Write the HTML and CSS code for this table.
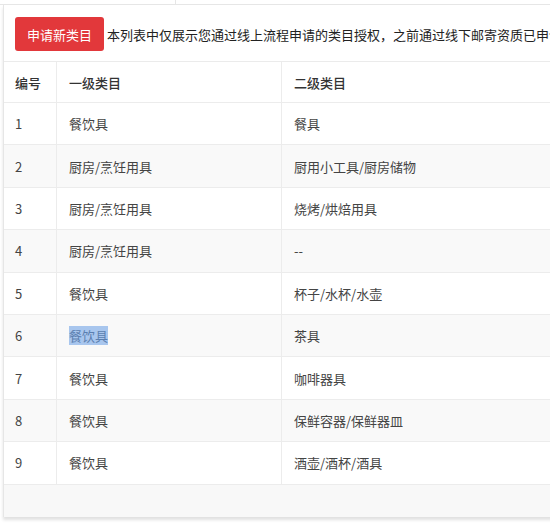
FILE: index.html
```html
<!DOCTYPE html>
<html lang="zh">
<head>
<meta charset="utf-8">
<link rel="stylesheet" href="styles.css">
</head>
<body>
<div class="top-strip">
  <div class="ts-cell ts-left"></div>
  <div class="ts-cell ts-right"></div>
</div>
<div class="panel">
  <div class="toolbar">
    <button class="btn-apply">申请新类目</button>
    <span class="notice">本列表中仅展示您通过线上流程申请的类目授权，之前通过线下邮寄资质已申请</span>
  </div>
  <table class="cat-table">
    <thead>
      <tr><th class="c-no">编号</th><th class="c-l1">一级类目</th><th class="c-l2">二级类目</th></tr>
    </thead>
    <tbody>
      <tr><td>1</td><td>餐饮具</td><td>餐具</td></tr>
      <tr><td>2</td><td>厨房/烹饪用具</td><td>厨用小工具/厨房储物</td></tr>
      <tr><td>3</td><td>厨房/烹饪用具</td><td>烧烤/烘焙用具</td></tr>
      <tr><td>4</td><td>厨房/烹饪用具</td><td class="muted">--</td></tr>
      <tr><td>5</td><td>餐饮具</td><td>杯子/水杯/水壶</td></tr>
      <tr><td>6</td><td><span class="selected">餐饮具</span></td><td>茶具</td></tr>
      <tr><td>7</td><td>餐饮具</td><td>咖啡器具</td></tr>
      <tr><td>8</td><td>餐饮具</td><td>保鲜容器/保鲜器皿</td></tr>
      <tr><td>9</td><td>餐饮具</td><td>酒壶/酒杯/酒具</td></tr>
    </tbody>
  </table>
  <div class="panel-foot"></div>
</div>
</body>
</html>
```
FILE: styles.css
```css
html, body {
  margin: 0;
  padding: 0;
  background: #ffffff;
  overflow: hidden;
  width: 550px;
  height: 525px;
}
body {
  font-family: "Noto Sans CJK SC", "Microsoft YaHei", sans-serif;
  font-size: 13px;
  color: #333333;
}
.top-strip {
  display: flex;
  height: 4px;
  border-bottom: 1px solid #e6e6e6;
  width: 700px;
}
.ts-left {
  width: 175px;
  border-right: 1px solid #e6e6e6;
}
.ts-right {
  flex: 1;
}
.panel {
  margin-left: 3px;
  width: 700px;
  border-left: 1px solid #e6e6e6;
  box-shadow: 0 3px 3px rgba(0, 0, 0, 0.12);
  background: #ffffff;
}
.toolbar {
  display: flex;
  align-items: center;
  gap: 3px;
  padding: 12px 0 10px 11px;
  border-bottom: 1px solid #ebebeb;
  white-space: nowrap;
}
.btn-apply {
  width: 89px;
  height: 34px;
  border: none;
  border-radius: 3px;
  background: #e2383b;
  color: #ffffff;
  font-family: inherit;
  font-size: 13px;
  padding: 0;
  flex: none;
}
.notice {
  color: #222222;
  font-size: 13px;
}
.cat-table {
  width: 100%;
  border-collapse: collapse;
  table-layout: fixed;
}
.cat-table th,
.cat-table td {
  height: 41.4px;
  padding: 0 0 0 12px;
  text-align: left;
  font-weight: normal;
  border-bottom: 1px solid #ececec;
  border-left: 1px solid #ececec;
  vertical-align: middle;
  color: #444444;
}
.cat-table th {
  color: #333333;
  font-weight: 500;
  height: 40px;
}
.cat-table th:first-child,
.cat-table td:first-child {
  border-left: none;
  padding-left: 11px;
}
.c-no { width: 41px; }
.c-l1 { width: 212px; }
.cat-table tbody tr:nth-child(even) td {
  background: #f9f9f9;
}
.muted {
  color: #888888;
}
.selected {
  background: #a8c6ee;
  color: #5b7fb0;
}
.panel-foot {
  height: 32px;
  background: #f8f8f8;
}
```
